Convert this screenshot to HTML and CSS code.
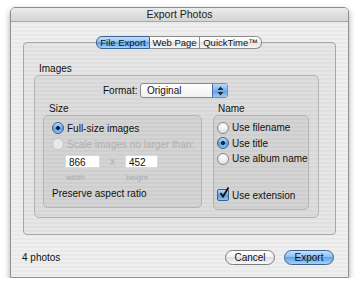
FILE: index.html
```html
<!DOCTYPE html>
<html lang="en">
<head>
    <meta charset="UTF-8">
    <title>Export Photos</title>
    <link rel="stylesheet" href="styles.css">
</head>
<body>
    <div class="window">
        <div class="titlebar">Export Photos</div>
        <div class="pane">
            <div class="tabs">
                <span class="tab active">File Export</span>
                <span class="tab">Web Page</span>
                <span class="tab">QuickTime™</span>
            </div>
            <div class="tabbox">
                <div class="label">Images</div>
                <div class="group images">
                    <div class="format-row">
                        <span>Format:</span>
                        <div class="popup">
                            <span class="popup-text">Original</span>
                            <span class="popup-arrows">
                                <svg width="7" height="10" viewBox="0 0 7 10"><path d="M3.5 0.5 L6.5 4 L0.5 4 Z M3.5 9.5 L6.5 6 L0.5 6 Z" fill="#1c2a3e"/></svg>
                            </span>
                        </div>
                    </div>
                    <div class="columns">
                        <div class="size-col">
                            <div class="label">Size</div>
                            <div class="group size">
                                <div class="option"><span class="radio on"></span>Full-size images</div>
                                <div class="option disabled"><span class="radio"></span>Scale images no larger than:</div>
                                <div class="dims">
                                    <div class="dim w">
                                        <div class="field">866</div>
                                        <div class="caption">width</div>
                                    </div>
                                    <span class="times">x</span>
                                    <div class="dim h">
                                        <div class="field">452</div>
                                        <div class="caption">height</div>
                                    </div>
                                </div>
                                <div class="note">Preserve aspect ratio</div>
                            </div>
                        </div>
                        <div class="name-col">
                            <div class="label">Name</div>
                            <div class="group name">
                                <div class="option"><span class="radio"></span>Use filename</div>
                                <div class="option"><span class="radio on"></span>Use title</div>
                                <div class="option"><span class="radio"></span>Use album name</div>
                                <div class="option check-row">
                                    <span class="checkbox">
                                        <svg width="12" height="12" viewBox="0 0 12 12"><path d="M2.5 6 L5 9.5 L10.5 0.5" fill="none" stroke="#111" stroke-width="1.8"/></svg>
                                    </span>Use extension
                                </div>
                            </div>
                        </div>
                    </div>
                </div>
            </div>
            <div class="footer">
                <span class="count">4 photos</span>
                <div class="buttons">
                    <span class="btn">Cancel</span>
                    <span class="btn default">Export</span>
                </div>
            </div>
        </div>
    </div>
</body>
</html>
```

FILE: styles.css
```css
* {
    box-sizing: border-box;
}

body {
    margin: 0;
    padding: 0;
    background: #fff;
    font-family: 'Liberation Sans', Arial, sans-serif;
    font-size: 10px;
    color: #111;
}

.window {
    width: 339px;
    height: 271px;
    margin: 7px 0 0 10px;
    border: 1px solid #8e8e8e;
    border-radius: 5px 5px 0 0;
    box-shadow: 0 3px 6px rgba(0, 0, 0, 0.35);
    background: repeating-linear-gradient(#efefef 0, #efefef 2px, #e9e9e9 2px, #e9e9e9 4px);
    overflow: hidden;
}

.titlebar {
    height: 14px;
    line-height: 13px;
    text-align: center;
    font-size: 10.5px;
    color: #222;
    border-bottom: 1px solid #a8a8a8;
    background: linear-gradient(#ebebeb, #d4d4d4);
}

.pane {
    padding-top: 14px;
}

.tabs {
    position: relative;
    z-index: 1;
    display: flex;
    height: 13px;
    margin-left: 85px;
    font-size: 9.5px;
}

.tab {
    line-height: 11px;
    text-align: center;
    border: 1px solid #8d8d8d;
    border-left: none;
    background: linear-gradient(#ffffff, #f4f4f4 45%, #e2e2e2 50%, #f6f6f6);
}

.tab:nth-child(1) { width: 54px; }
.tab:nth-child(2) { width: 50px; }
.tab:nth-child(3) { width: 62px; border-radius: 0 6px 6px 0; }

.tab.active {
    border: 1px solid #3e628f;
    border-radius: 6px 0 0 6px;
    background: linear-gradient(#c6e0fa, #8ec2f2 45%, #5fa4ea 50%, #a6d2f8);
}

.tabbox {
    height: 193px;
    margin: -7px 12px 0;
    padding: 20px 0 0 10px;
    border: 1px solid #a6a6a6;
    border-radius: 4px;
    background: rgba(0, 0, 0, 0.035);
}

.label {
    line-height: 12px;
    padding-left: 5px;
}

.group {
    border: 1px solid #b4b4b4;
    border-radius: 5px;
    background: rgba(0, 0, 0, 0.04);
}

.images {
    width: 285px;
    height: 143px;
    padding: 7px 8px 0;
}

.format-row {
    display: flex;
    align-items: center;
    padding-left: 60px;
    height: 15px;
}

.format-row > span {
    width: 37px;
}

.popup {
    display: flex;
    width: 88px;
    height: 15px;
    border: 1px solid #8a8a8a;
    border-radius: 3px;
    background: linear-gradient(#fff, #f2f2f2);
    overflow: hidden;
}

.popup-text {
    flex: 1;
    line-height: 13px;
    padding-left: 6px;
}

.popup-arrows {
    width: 15px;
    display: flex;
    align-items: center;
    justify-content: center;
    border-left: 1px solid #4a6f9c;
    background: linear-gradient(#b8d8f8, #78b2ee 50%, #5a9de6 51%, #9ccaf6);
}

.columns {
    display: flex;
    gap: 11px;
    margin-top: 5px;
}

.size-col .label {
    padding-left: 6px;
}

.size {
    width: 159px;
    height: 93px;
    padding-top: 4px;
}

.name {
    width: 96px;
    height: 95px;
    padding-top: 4px;
}

.option {
    display: flex;
    align-items: center;
    height: 16px;
    padding-left: 8px;
}

.name .option {
    padding-left: 3px;
    height: 15.5px;
}

.option.disabled {
    color: #b0b0b0;
}

.radio {
    width: 12px;
    height: 12px;
    margin-right: 3px;
    border: 1px solid #8a8a8a;
    border-radius: 50%;
    background: radial-gradient(circle at 50% 30%, #fff, #e4e4e4 70%, #cfcfcf);
}

.radio.on {
    border-color: #3a5f8c;
    background: radial-gradient(circle, #14243c 0, #14243c 1.7px, transparent 2.2px),
                linear-gradient(#bfdcf8, #5d9fe6 55%, #8cc0f2);
}

.option.disabled .radio {
    border-color: #c8c8c8;
    background: #e8e8e8;
}

.dims {
    display: flex;
    margin: 3px 0 0 21px;
}

.field {
    height: 13px;
    line-height: 13px;
    padding-left: 3px;
    background: #fff;
    border: 1px solid #dadada;
}

.dim.w .field { width: 35px; }
.dim.h .field { width: 33px; }

.caption {
    font-size: 8px;
    line-height: 9px;
    margin-top: 5px;
    padding-left: 1px;
    color: #a8a8a8;
}

.times {
    width: 25px;
    text-align: center;
    line-height: 13px;
    color: #b0b0b0;
}

.note {
    margin: 6px 0 0 8px;
    line-height: 12px;
}

.check-row {
    margin-top: 21px;
}

.checkbox {
    position: relative;
    width: 12px;
    height: 12px;
    margin-right: 3px;
    border: 1px solid #3a5f8c;
    border-radius: 2px;
    background: linear-gradient(#bfdcf8, #5d9fe6 55%, #8cc0f2);
}

.checkbox svg {
    position: absolute;
    left: 0;
    top: -3px;
}

.footer {
    display: flex;
    justify-content: space-between;
    align-items: center;
    height: 42px;
    padding: 3px 14px 0 11px;
}

.buttons {
    display: flex;
    gap: 9px;
}

.btn {
    width: 50px;
    height: 15px;
    line-height: 13px;
    text-align: center;
    border: 1px solid #7d7d7d;
    border-radius: 8px;
    background: linear-gradient(#ffffff, #f2f2f2 45%, #dedede 50%, #f7f7f7);
}

.btn.default {
    border-color: #3e628f;
    background: linear-gradient(#c6e0fa, #8ec2f2 45%, #5fa4ea 50%, #a6d2f8);
}
```
